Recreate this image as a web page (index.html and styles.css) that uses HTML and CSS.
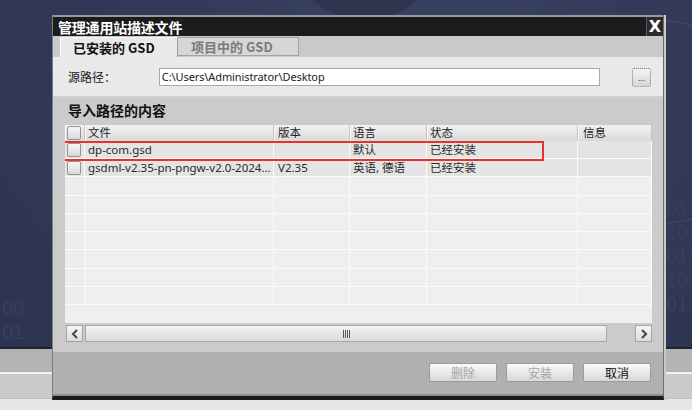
FILE: index.html
```html
<!DOCTYPE html>
<html lang="zh">
<head>
<meta charset="utf-8">
<link rel="stylesheet" href="styles.css">
</head>
<body>
<div class="desktop">
  <div class="wallpaper">
    <div class="deco gear"></div>
    <div class="deco ring"></div>
    <div class="deco bits bits-r">01<br>10<br>01<br>10<br>01</div>
    <div class="deco bits bits-l">00<br>01</div>
  </div>
  <div class="band band1"></div>
  <div class="band band2"></div>
  <div class="band band3"></div>

  <div class="dialog">
    <div class="titlebar">
      <span class="title">管理通用站描述文件</span>
      <span class="close">X</span>
    </div>
    <div class="tabbar">
      <div class="tab active">已安装的 GSD</div>
      <div class="tab">项目中的 GSD</div>
    </div>
    <div class="source">
      <span class="src-label">源路径：</span>
      <div class="src-input">C:\Users\Administrator\Desktop</div>
      <div class="browse">...</div>
    </div>
    <div class="content">
      <div class="heading">导入路径的内容</div>
      <div class="table">
        <div class="row head">
          <div class="c c0"><span class="cb"></span></div>
          <div class="c c1">文件</div>
          <div class="c c2">版本</div>
          <div class="c c3">语言</div>
          <div class="c c4">状态</div>
          <div class="c c5">信息</div>
        </div>
        <div class="row filled">
          <div class="c c0"><span class="cb"></span></div>
          <div class="c c1">dp-com.gsd</div>
          <div class="c c2"></div>
          <div class="c c3">默认</div>
          <div class="c c4">已经安装</div>
          <div class="c c5"></div>
        </div>
        <div class="row filled">
          <div class="c c0"><span class="cb"></span></div>
          <div class="c c1">gsdml-v2.35-pn-pngw-v2.0-2024...</div>
          <div class="c c2">V2.35</div>
          <div class="c c3">英语, 德语</div>
          <div class="c c4">已经安装</div>
          <div class="c c5"></div>
        </div>
        <div class="row empty"><div class="c c0"></div><div class="c c1"></div><div class="c c2"></div><div class="c c3"></div><div class="c c4"></div><div class="c c5"></div></div>
        <div class="row empty"><div class="c c0"></div><div class="c c1"></div><div class="c c2"></div><div class="c c3"></div><div class="c c4"></div><div class="c c5"></div></div>
        <div class="row empty"><div class="c c0"></div><div class="c c1"></div><div class="c c2"></div><div class="c c3"></div><div class="c c4"></div><div class="c c5"></div></div>
        <div class="row empty"><div class="c c0"></div><div class="c c1"></div><div class="c c2"></div><div class="c c3"></div><div class="c c4"></div><div class="c c5"></div></div>
        <div class="row empty"><div class="c c0"></div><div class="c c1"></div><div class="c c2"></div><div class="c c3"></div><div class="c c4"></div><div class="c c5"></div></div>
        <div class="row empty"><div class="c c0"></div><div class="c c1"></div><div class="c c2"></div><div class="c c3"></div><div class="c c4"></div><div class="c c5"></div></div>
        <div class="row empty"><div class="c c0"></div><div class="c c1"></div><div class="c c2"></div><div class="c c3"></div><div class="c c4"></div><div class="c c5"></div></div>
        <div class="highlight"></div>
      </div>
      <div class="hscroll">
        <div class="sbtn">
          <svg width="8" height="10" viewBox="0 0 8 10"><path d="M6 1 L2 5 L6 9" fill="none" stroke="#444" stroke-width="2"/></svg>
        </div>
        <div class="thumb"><span class="grip"></span></div>
        <div class="track"></div>
        <div class="sbtn">
          <svg width="8" height="10" viewBox="0 0 8 10"><path d="M2 1 L6 5 L2 9" fill="none" stroke="#444" stroke-width="2"/></svg>
        </div>
      </div>
    </div>
    <div class="footer">
      <div class="btn disabled">删除</div>
      <div class="btn disabled">安装</div>
      <div class="btn">取消</div>
    </div>
  </div>
</div>
</body>
</html>
```
FILE: styles.css
```css
html, body {
  margin: 0;
  padding: 0;
}
body {
  width: 692px;
  height: 410px;
  overflow: hidden;
  font-family: "Noto Sans", "Noto Sans CJK SC", sans-serif;
}
.desktop {
  position: relative;
  width: 692px;
  height: 410px;
  display: flex;
  flex-direction: column;
  background: #e6e6e6;
}
.wallpaper {
  position: relative;
  height: 347px;
  flex: none;
  overflow: hidden;
  background: radial-gradient(ellipse at 60% 20%, #3a4463 0%, #323a57 45%, #2d3450 100%);
}
.deco { position: absolute; }
.gear {
  left: 300px;
  top: -80px;
  width: 130px;
  height: 100px;
  border-radius: 50%;
  background: #2e3550;
}
.ring {
  left: 560px;
  top: 20px;
  width: 200px;
  height: 200px;
  border-radius: 50%;
  border: 2px solid #3a4565;
}
.bits {
  font-family: "Liberation Sans", sans-serif;
  font-size: 20px;
  line-height: 24px;
  color: #36405e;
}
.bits-r { left: 666px; top: 196px; }
.bits-l { left: 2px; top: 296px; }
.band { flex: none; }
.band1 {
  height: 23px;
  background: #b3b3b3;
  border-top: 2px solid #1d2337;
}
.band2 {
  height: 24px;
  background: #cacaca;
  border-top: 2px solid #f2f2f2;
}
.band3 {
  flex: 1;
  background: #e6e6e6;
  border-top: 1px solid #bdbdbd;
}

/* dialog window */
.dialog {
  position: absolute;
  left: 52px;
  top: 15px;
  width: 610px;
  height: 380px;
  display: flex;
  flex-direction: column;
  border-left: 1px solid #7d7d7d;
  border-right: 1px solid #6c6c6c;
  border-bottom: 5px solid #1b1b1b;
  box-shadow: 2px 0 0 #c9c9c9;
  background: #cbcbcb;
}
.titlebar {
  height: 19px;
  flex: none;
  border-top: 2px solid #9a9a9a;
  background: #1c1c1c;
  display: flex;
  align-items: center;
  justify-content: space-between;
}
.title {
  color: #fff;
  font-size: 14px;
  font-weight: bold;
  padding-left: 5px;
  letter-spacing: -0.2px;
  font-family: "Noto Sans CJK SC", sans-serif;
}
.close {
  width: 16px;
  height: 19px;
  background: #2b2b2b;
  border-left: 1px solid #5a5a5a;
  color: #fff;
  font-family: "DejaVu Sans", sans-serif;
  font-size: 16px;
  font-weight: bold;
  line-height: 19px;
  text-align: center;
}
.tabbar {
  height: 21px;
  flex: none;
  background: #c9c9c9;
  display: flex;
  align-items: flex-end;
  padding-left: 7px;
}
.tab {
  box-sizing: border-box;
  font-size: 13px;
  font-weight: bold;
  font-family: "Noto Sans CJK SC", sans-serif;
  display: flex;
  align-items: center;
}
.tab.active {
  width: 118px;
  height: 20px;
  background: #e9e9e9;
  border-left: 1px solid #ffffff;
  border-top: 1px solid #f6f6f6;
  border-right: 1px solid #9e9e9e;
  padding-left: 12px;
  color: #111;
}
.tab:not(.active) {
  width: 121px;
  height: 19px;
  margin-bottom: 1px;
  background: #d6d6d6;
  border: 1px solid #a3a3a3;
  border-left: none;
  padding-left: 13px;
  color: #7b7b7b;
}
.source {
  height: 40px;
  flex: none;
  box-sizing: border-box;
  background: #e9e9e9;
  display: flex;
  align-items: flex-start;
  padding: 11px 12px 0 15px;
  border-bottom: 1px solid #d2d2d2;
}
.src-label {
  width: 91px;
  font-size: 12px;
  line-height: 17px;
  color: #222;
  font-family: "Noto Sans CJK SC", sans-serif;
}
.src-input {
  box-sizing: border-box;
  width: 442px;
  height: 18px;
  background: #fff;
  border: 1px solid #a8a8a8;
  font-size: 11px;
  line-height: 16px;
  padding-left: 2px;
  letter-spacing: -0.1px;
  color: #222;
}
.browse {
  box-sizing: border-box;
  margin-left: 32px;
  width: 19px;
  height: 19px;
  border: 1px dotted #7a7a7a;
  border-radius: 2px;
  background: linear-gradient(#f4f4f4, #d6d6d6);
  font-size: 9px;
  line-height: 17px;
  text-align: center;
  color: #333;
}
.content {
  flex: 1;
  background: #cbcbcb;
  padding: 0 11px 0 12px;
  display: flex;
  flex-direction: column;
}
.heading {
  height: 28px;
  flex: none;
  box-sizing: border-box;
  padding-left: 3px;
  font-size: 14px;
  font-weight: bold;
  line-height: 27px;
  color: #111;
  font-family: "Noto Sans CJK SC", sans-serif;
}
.table {
  position: relative;
  height: 198px;
  flex: none;
  overflow: hidden;
  background: #efefef;
}
.row {
  display: grid;
  grid-template-columns: 20px 189px 76px 77px 151px 74px;
  height: 18.22px;
  box-sizing: border-box;
  border-bottom: 1px solid #fbfbfb;
}
.row.head {
  height: 16px;
  border-bottom: none;
  background: linear-gradient(#f2f2f2, #dadada);
}
.c {
  box-sizing: border-box;
  font-size: 11.5px;
  line-height: 17px;
  color: #2a2a2a;
  padding-left: 3px;
  white-space: nowrap;
  overflow: hidden;
  border-right: 1px solid #fafafa;
  font-family: "Noto Sans", "Noto Sans CJK SC", sans-serif;
}
.head .c {
  line-height: 16px;
  border-right: 1px solid #c4c4c4;
  box-shadow: inset 1px 0 0 #fafafa;
  color: #222;
}
.c2 { padding-left: 4px; }
.c5 { padding-left: 5px; }
.c0 { padding-left: 2px; display: flex; align-items: center; }
.filled .c { background: #e4e4e4; }
.empty .c0 { background: #ececec; }
.cb {
  box-sizing: border-box;
  width: 14px;
  height: 14px;
  border: 1px solid #959595;
  border-radius: 2px;
  background: linear-gradient(#f6f6f6, #d9d9d9);
}
.highlight {
  position: absolute;
  left: -4px;
  top: 16px;
  width: 483px;
  height: 20px;
  box-sizing: border-box;
  border: 2px solid #e8312f;
}
.hscroll {
  margin-top: 2px;
  height: 17px;
  flex: none;
  display: flex;
  gap: 2px;
}
.sbtn {
  box-sizing: border-box;
  width: 17px;
  height: 17px;
  border: 1px solid #a4a4a4;
  background: linear-gradient(#f6f6f6, #dcdcdc);
  display: flex;
  align-items: center;
  justify-content: center;
}
.sbtn:first-child { margin-left: 1px; }
.thumb {
  box-sizing: border-box;
  width: 522px;
  height: 17px;
  border: 1px solid #a8a8a8;
  background: linear-gradient(#f3f3f3, #dadada);
  display: flex;
  align-items: center;
  justify-content: center;
}
.grip {
  width: 7px;
  height: 8px;
  background: repeating-linear-gradient(90deg, #555 0 1px, transparent 1px 2px);
}
.track {
  width: 24px;
}
.footer {
  height: 44px;
  flex: none;
  margin-top: 10px;
  box-sizing: border-box;
  background: #b0b0b0;
  border-bottom: 2px solid #8e8e8e;
  display: flex;
  justify-content: flex-end;
  align-items: flex-start;
  gap: 9px;
  padding: 11px 12px 0 0;
}
.btn {
  box-sizing: border-box;
  width: 68px;
  height: 19px;
  border: 1px solid #9a9a9a;
  border-radius: 2px;
  background: linear-gradient(#fafafa, #d8d8d8);
  font-size: 12px;
  line-height: 17px;
  text-align: center;
  color: #111;
  font-family: "Noto Sans CJK SC", sans-serif;
}
.btn.disabled { color: #a6a6a6; }
```
